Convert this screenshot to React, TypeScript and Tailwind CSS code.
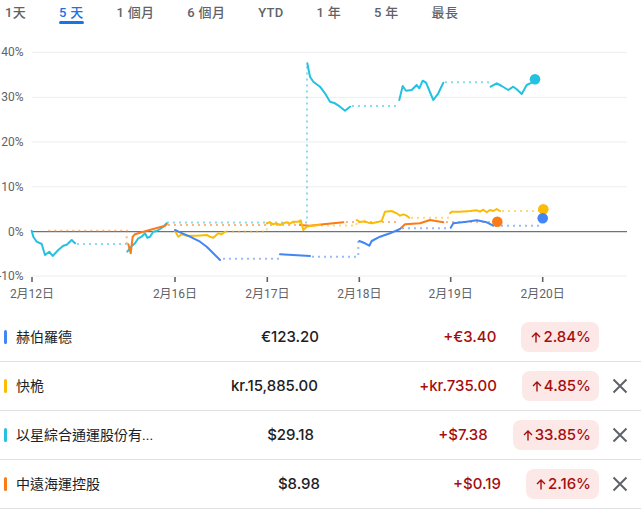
import React from 'react';

const FONT = { fontFamily: 'Roboto, "Noto Sans CJK TC", "Noto Sans", sans-serif' };
const NUM = { fontFamily: 'Inter, Roboto, "Noto Sans CJK TC", sans-serif' };

const tabs = ['1天', '5 天', '1 個月', '6 個月', 'YTD', '1 年', '5 年', '最長'];

const C = { blue: '#4285f4', yellow: '#fbbc04', teal: '#24c1e0', orange: '#fa7b17' };

type Seg = { pts: string; dotted?: boolean };

const series: { color: string; segs: Seg[]; dot: [number, number] }[] = [
    {
        color: C.teal,
        dot: [535, 79.3],
        segs: [
            { pts: '31.7,230.7 33.3,236.7 36.7,241.7 41.7,244 45,255 49.3,251.7 52.7,256 58.3,250 63.3,245.7 66.7,244.7 71.7,240 75,243.3' },
            { pts: '77,244 126.7,244', dotted: true },
            { pts: '127.3,251.7 131.7,246 135,243.3 138.3,238.3 141.7,236.7 145,233.3 147.3,237.7 150,236.7 153.3,231.7 156.7,231 160,229 163.3,226.7 166.7,223.3' },
            { pts: '167,222.5 307,222.5 307,64', dotted: true },
            { pts: '307.3,63.3 310,76.7 313.3,81.7 320,86.7 325,93.3 330,101.7 335,103.3 340,106.7 345,110.7 350,106.7' },
            { pts: '352,106 398.3,106', dotted: true },
            { pts: '399.3,100 402.7,86 406,90.7 411.7,90 416.7,85 419.3,88.3 422.7,80.7 426,82.7 433.3,100 438.3,93.3 443.3,82.7' },
            { pts: '445,82.3 491.7,82.3', dotted: true },
            { pts: '490.7,86.7 496.7,83.3 501.7,86 508.3,90 513.3,86.7 516.7,89.3 521.7,94 526.7,85 531.7,82.7 535,79.3' },
        ],
    },
    {
        color: C.orange,
        dot: [497.3, 221.7],
        segs: [
            { pts: '48.3,230.7 126.7,230.7 126.7,244', dotted: true },
            { pts: '128.3,244.3 130.7,253.3 132.7,236.7 135,234.3 143.3,231.7 153.3,229 165,225.7 166.7,224.3' },
            { pts: '168,225 300,225', dotted: true },
            { pts: '300,225 310,225.7 323.3,224.3 333.3,223.3 343.3,222.3' },
            { pts: '346,222 399,222', dotted: true },
            { pts: '400.7,228.3 405,224.3 420,223.3 430,220 443.3,222.3' },
            { pts: '446,222 495,222', dotted: true },
        ],
    },
    {
        color: C.yellow,
        dot: [543.3, 209.3],
        segs: [
            { pts: '175,231 178.3,236.7 181.7,234.3 186.7,235.7 196.7,235.7 206.7,235 210,236.7 213.3,237.7 218.3,233.3 221.7,234.3 225,231.7' },
            { pts: '226,231.5 266.7,231.5 266.7,224', dotted: true },
            { pts: '266.7,223.3 270,222.3 273.3,224.3 276.7,223.3 280,225 283.3,223.3 286.7,222.3 290,223.7 293.3,221.7 298.3,221.7 300.7,220.3 303.3,230 306.7,226.7 311.7,225.7 320,225' },
            { pts: '321,225.5 356.5,225.5 356.5,221', dotted: true },
            { pts: '356.7,220 360,222 365,221.3 368.3,222.7 371.7,223.3 376.7,222.3 381.7,221 385,211.7 391.7,211 396.7,213.3 400,215.7 403.3,214.3 406.7,215.7 409.3,217.7' },
            { pts: '411,217.7 450,217.7', dotted: true },
            { pts: '450,213.3 451.7,211.7 460,211.7 470,211 476.7,210.3 480,211.7 483.3,209.7 486.7,212.3 490,210 493.3,211 496.7,209 500,211' },
            { pts: '502,211 541,211', dotted: true },
        ],
    },
    {
        color: C.blue,
        dot: [542.7, 218.3],
        segs: [
            { pts: '175,230 180,232.3 190,236.7 200,241.7 206.7,246.7 213.3,253.3 218.3,258.3 220,260' },
            { pts: '223,258.7 279,258.7', dotted: true },
            { pts: '280,254.3 310,256' },
            { pts: '312,256.7 358.3,256.7 358.3,241', dotted: true },
            { pts: '359.3,241 365,243.3 369.3,245.7 371.7,241 380,236.7 390,233.3 400,229' },
            { pts: '402,228.3 450,228.3', dotted: true },
            { pts: '450.7,227.7 453.3,223.3 466.7,221.7 476.7,220.3 486.7,222.3 493.3,225.7' },
            { pts: '495,225.7 540,225.7', dotted: true },
        ],
    },
];

const yLabels = [
    { t: '40%', y: 52.3 },
    { t: '30%', y: 97.3 },
    { t: '20%', y: 142 },
    { t: '10%', y: 186.8 },
    { t: '0%', y: 231.7 },
    { t: '-10%', y: 276 },
];

const xTicks = [
    { t: '2月12日', x: 32 },
    { t: '2月16日', x: 175 },
    { t: '2月17日', x: 267.3 },
    { t: '2月18日', x: 359.3 },
    { t: '2月19日', x: 450.7 },
    { t: '2月20日', x: 542.7 },
];

const rows = [
    { name: '赫伯羅德', color: C.blue, price: '€123.20', pricePad: 'pr-[1px]', change: '+€3.40', pct: '2.84%', close: false },
    { name: '快桅', color: C.yellow, price: 'kr.15,885.00', pricePad: 'pr-[2px]', change: '+kr.735.00', pct: '4.85%', close: true },
    { name: '以星綜合通運股份有...', color: C.teal, price: '$29.18', pricePad: 'pr-[6px]', change: '+$7.38', pct: '33.85%', close: true },
    { name: '中遠海運控股', color: C.orange, price: '$8.98', pricePad: 'pr-0', change: '+$0.19', pct: '2.16%', close: true },
];

const Chart = () => (
    <svg width="641" height="273" viewBox="0 40 641 273" className="block">
        {/* grid */}
        {[52.3, 97.3, 142, 186.8, 276].map(y => (
            <line key={y} x1="32" x2="627" y1={y} y2={y} stroke="#ebedf0" strokeWidth="1" />
        ))}
        <line x1="32" x2="627" y1="231.7" y2="231.7" stroke="#6f7378" strokeWidth="1.2" />
        {yLabels.map(l => (
            <text key={l.t} x="23.5" y={l.y + 4} textAnchor="end" fontSize="12" fill="#5f6368">{l.t}</text>
        ))}
        {xTicks.map(t => (
            <g key={t.t}>
                <line x1={t.x} x2={t.x} y1="277" y2="282" stroke="#5f6368" strokeWidth="1.6" />
                <text x={t.x} y="298" textAnchor="middle" fontSize="12" fill="#5f6368">{t.t}</text>
            </g>
        ))}
        {series.map(s => (
            <g key={s.color}>
                {s.segs.filter(g => g.dotted).map(g => (
                    <polyline key={g.pts} points={g.pts} fill="none" stroke={s.color} strokeOpacity="0.55" strokeWidth="2" strokeDasharray="2 4" />
                ))}
            </g>
        ))}
        {series.map(s => (
            <g key={s.color}>
                {s.segs.filter(g => !g.dotted).map(g => (
                    <polyline key={g.pts} points={g.pts} fill="none" stroke={s.color} strokeWidth="2" strokeLinejoin="round" strokeLinecap="round" />
                ))}
            </g>
        ))}
        {series.map(s => (
            <circle key={s.color} cx={s.dot[0]} cy={s.dot[1]} r="5.3" fill={s.color} />
        ))}
    </svg>
);

export default function App() {
    return (
        <div className="w-[641px] h-[510px] bg-white overflow-hidden" style={FONT}>
            {/* Range tabs */}
            <div className="h-[40px] flex items-start gap-[33px] pl-[5px] pt-[5px]">
                {tabs.map((t, i) => (
                    <div key={t} className="flex flex-col">
                        <span className={`text-[13px] leading-[16px] font-medium tracking-[0.3px] ${i === 1 ? 'text-[#1a73e8]' : 'text-[#5f6368]'}`}>{t}</span>
                        {i === 1 && <div className="h-[3px] rounded-full bg-[#1a73e8]" />}
                    </div>
                ))}
            </div>

            <Chart />

            {/* Comparison rows */}
            <div>
                {rows.map(r => (
                    <div key={r.name} className="h-[49px] flex items-center border-b border-[#dfe1e5]">
                        <div className="w-[320px] flex items-center">
                            <div className="ml-[4px] w-[3px] h-[14px] rounded-full" style={{ backgroundColor: r.color }} />
                            <span className="ml-[9px] flex-1 text-[14px] text-[#202124]">{r.name}</span>
                            <span className={`text-[15px] font-medium text-[#202124] ${r.pricePad}`} style={NUM}>{r.price}</span>
                        </div>
                        <div className="flex-1 text-right pr-[25px] text-[15px] font-medium text-[#a50e0e]" style={NUM}>{r.change}</div>
                        <div className="h-[30px] pl-[10px] pr-[8px] rounded-lg bg-[#fce8e6] flex items-center text-[15px] font-medium text-[#a50e0e]" style={NUM}>
                            <svg width="10" height="11" viewBox="0 0 10 11" className="mr-[2px]">
                                <path d="M5 10.5 V1.2 M1 5 L5 1 L9 5" fill="none" stroke="#a50e0e" strokeWidth="1.4" />
                            </svg>
                            {r.pct}
                        </div>
                        <div className="w-[42px] flex items-center justify-center">
                            {r.close && (
                                <svg width="16" height="16" viewBox="0 0 16 16">
                                    <path d="M1.5 1.5 L14.5 14.5 M14.5 1.5 L1.5 14.5" stroke="#5f6368" strokeWidth="2" />
                                </svg>
                            )}
                        </div>
                    </div>
                ))}
            </div>
        </div>
    );
}
